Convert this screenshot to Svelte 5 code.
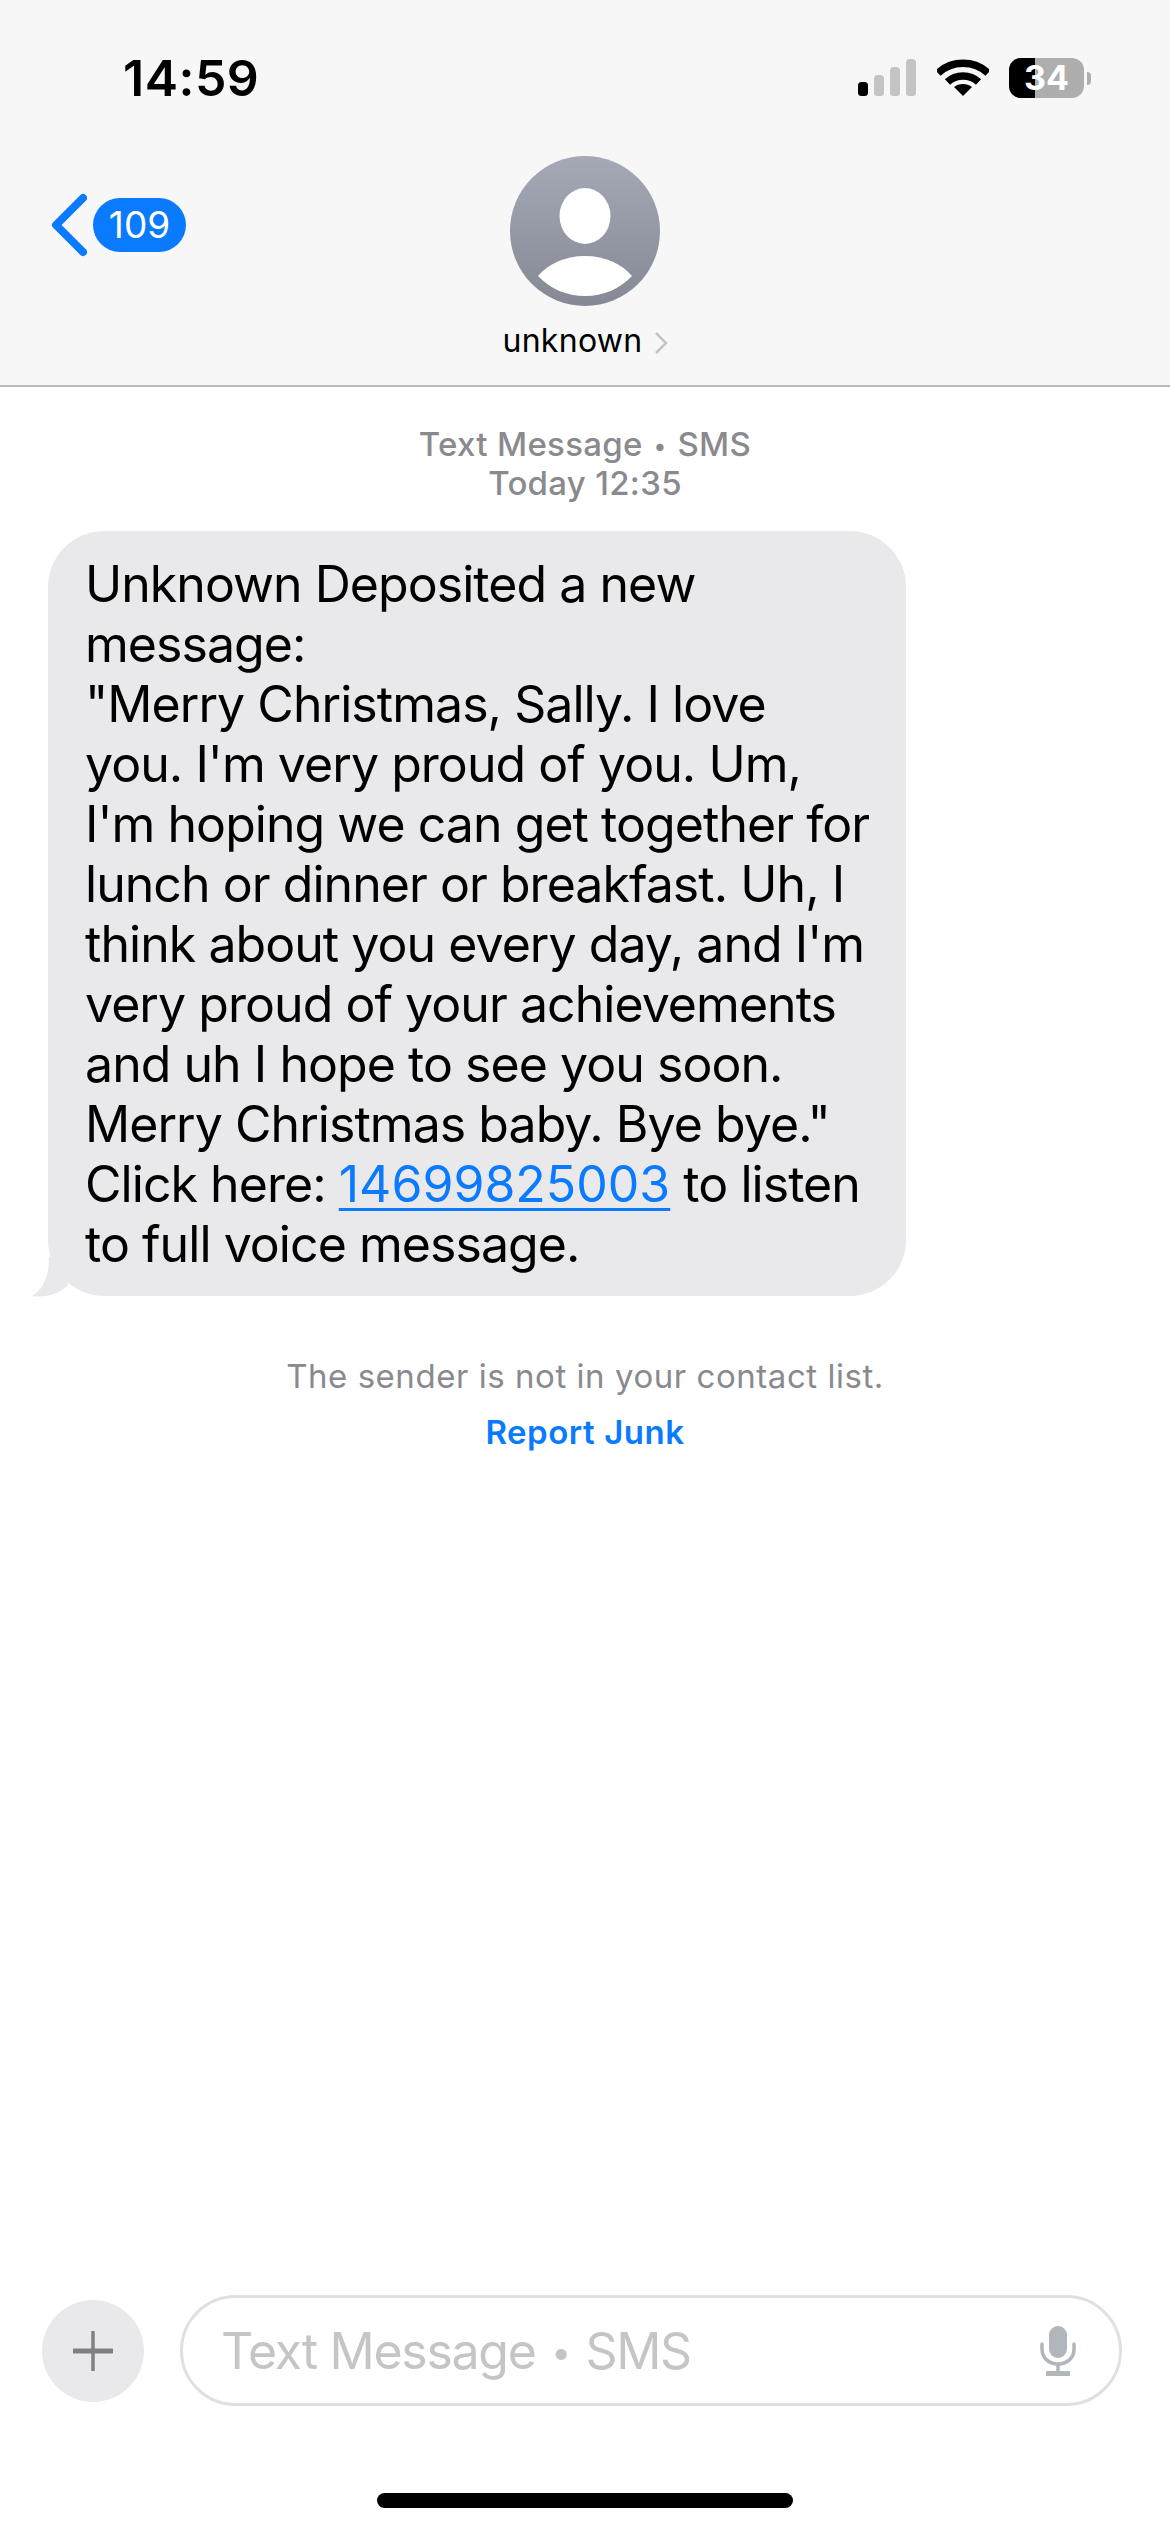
<script>
  const lines = [
    "Unknown Deposited a new",
    "message:",
    "\"Merry Christmas, Sally. I love",
    "you. I'm very proud of you. Um,",
    "I'm hoping we can get together for",
    "lunch or dinner or breakfast. Uh, I",
    "think about you every day, and I'm",
    "very proud of your achievements",
    "and uh I hope to see you soon.",
    "Merry Christmas baby. Bye bye.\"",
  ];
</script>

<div class="phone">
  <header>
    <div class="status">
      <span class="time">14:59</span>
      <div class="status-icons">
        <svg class="signal" width="58" height="38" viewBox="0 0 58 38">
          <rect x="0" y="23" width="10" height="14" rx="3.5" fill="#000" />
          <rect x="16" y="16" width="10" height="21" rx="3.5" fill="#c4c4c4" />
          <rect x="32" y="8" width="10" height="29" rx="3.5" fill="#c4c4c4" />
          <rect x="48" y="0" width="10" height="37" rx="3.5" fill="#c4c4c4" />
        </svg>
        <svg class="wifi" width="52" height="38" viewBox="0 0 52 38">
          <path d="M1 14 C15 1 37 1 51 14" fill="none" stroke="#000" stroke-width="7.5" />
          <path d="M10.5 23 C19 15 33 15 41.5 23" fill="none" stroke="#000" stroke-width="7.5" />
          <path d="M17 28 C22 24 30 24 35 28 L26 37 Z" fill="#000" />
        </svg>
        <div class="battery">
          <div class="level"></div>
          <span>34</span>
        </div>
        <div class="nub"></div>
      </div>
    </div>
    <nav>
      <div class="back">
        <svg width="38" height="64" viewBox="0 0 38 64">
          <path d="M34 5 L7 32 L34 59" fill="none" stroke="#0a7aff" stroke-width="8" stroke-linecap="round" stroke-linejoin="round" />
        </svg>
        <span class="badge">109</span>
      </div>
      <div class="contact">
        <svg width="150" height="150" viewBox="0 0 150 150">
          <defs>
            <linearGradient id="avatar" x1="0" y1="0" x2="0" y2="1">
              <stop offset="0" stop-color="#a5a9b6" />
              <stop offset="1" stop-color="#858994" />
            </linearGradient>
          </defs>
          <circle cx="75" cy="75" r="75" fill="url(#avatar)" />
          <ellipse cx="75" cy="60" rx="25.5" ry="28" fill="#fff" />
          <path d="M28 120 C38 108 55 100 75 100 C95 100 112 108 122 120 C110 133 93 140 75 140 C57 140 40 133 28 120 Z" fill="#fff" />
        </svg>
        <div class="name">
          <span>unknown</span>
          <svg width="14" height="24" viewBox="0 0 14 24">
            <path d="M2 2 L12 12 L2 22" fill="none" stroke="#c4c4c6" stroke-width="2.5" />
          </svg>
        </div>
      </div>
      <div></div>
    </nav>
  </header>

  <main>
    <div class="meta">
      <div>Text Message <span class="dot">•</span> SMS</div>
      <div>Today 12:35</div>
    </div>
    <div class="bubble">
      {#each lines as line}
        <div>{line}</div>
      {/each}
      <div>Click here: <a href="#top">14699825003</a> to listen</div>
      <div>to full voice message.</div>
      <svg class="tail" width="40" height="40" viewBox="0 0 40 40">
        <path d="M17 0 C17 20 11 32 0 39 C14 41 27 37 36 28 L36 0 Z" fill="#e9e9eb" />
      </svg>
    </div>
    <div class="notice">
      <div>The sender is not in your contact list.</div>
      <div class="junk">Report Junk</div>
    </div>
  </main>

  <footer>
    <div class="composer">
      <div class="plus">
        <svg width="40" height="40" viewBox="0 0 40 40">
          <path d="M20 1 V39" stroke="#7f7f84" stroke-width="3.5" stroke-linecap="round" />
          <path d="M1 20 H39" stroke="#7f7f84" stroke-width="5" stroke-linecap="round" />
        </svg>
      </div>
      <div class="input">
        <span class="placeholder">Text Message <span class="dot">•</span> SMS</span>
        <svg width="36" height="50" viewBox="0 0 36 50">
          <rect x="9" y="0" width="18" height="32" rx="9" fill="#b1b5bc" />
          <path d="M2 18 V23 C2 32 9 38 18 38 C27 38 34 32 34 23 V18" fill="none" stroke="#b1b5bc" stroke-width="3.5" stroke-linecap="round" />
          <path d="M18 38 V46" stroke="#b1b5bc" stroke-width="3.5" />
          <rect x="6" y="45" width="24" height="5" rx="1" fill="#b1b5bc" />
        </svg>
      </div>
    </div>
    <div class="home-bar"></div>
  </footer>
</div>

<style>
  :global(body) {
    margin: 0;
    background: #fff;
  }

  .phone {
    width: 1170px;
    height: 2532px;
    display: flex;
    flex-direction: column;
    font-family: Inter, "Liberation Sans", sans-serif;
    color: #000;
    overflow: hidden;
  }

  header {
    height: 387px;
    box-sizing: border-box;
    background: #f7f7f7;
    border-bottom: 2px solid #b9b9bb;
  }

  .status {
    height: 156px;
    box-sizing: border-box;
    padding: 50px 0 0 123px;
    display: flex;
    justify-content: space-between;
    align-items: flex-start;
  }

  .time {
    font-size: 50px;
    line-height: 56px;
    font-weight: 600;
    letter-spacing: 0.5px;
  }

  .status-icons {
    display: flex;
    align-items: center;
    margin: 8px 79px 0 0;
    height: 40px;
  }

  .signal {
    margin-right: 21px;
  }

  .wifi {
    margin-right: 20px;
  }

  .battery {
    position: relative;
    width: 75px;
    height: 40px;
    border-radius: 12px;
    overflow: hidden;
    background: #aeaeae;
    display: flex;
    align-items: center;
    justify-content: center;
  }

  .level {
    position: absolute;
    left: 0;
    top: 0;
    bottom: 0;
    width: 26px;
    background: #000;
  }

  .battery span {
    position: relative;
    color: #fff;
    font-size: 34px;
    font-weight: 700;
    line-height: 40px;
  }

  .nub {
    width: 4px;
    height: 13px;
    margin-left: 3px;
    background: #aeaeae;
    border-radius: 0 8px 8px 0;
  }

  nav {
    display: grid;
    grid-template-columns: 1fr 300px 1fr;
    align-items: flex-start;
  }

  .back {
    display: flex;
    align-items: center;
    gap: 6px;
    padding: 37px 0 0 49px;
  }

  .badge {
    width: 93px;
    height: 54px;
    border-radius: 27px;
    background: #0a7aff;
    color: #fff;
    font-size: 37px;
    line-height: 54px;
    text-align: center;
  }

  .contact {
    display: flex;
    flex-direction: column;
    align-items: center;
  }

  .name {
    display: flex;
    align-items: center;
    gap: 11px;
    margin-top: 15px;
    font-size: 32px;
    line-height: 40px;
    letter-spacing: 0.3px;
  }

  .name svg {
    margin-top: 4px;
  }

  main {
    flex: 1;
    display: flex;
    flex-direction: column;
  }

  .meta {
    margin-top: 38px;
    text-align: center;
    color: #8a8a8e;
    font-size: 33px;
    line-height: 39px;
    font-weight: 500;
    letter-spacing: 0.3px;
  }

  .dot {
    font-size: 0.7em;
    line-height: 0;
    vertical-align: 0.1em;
    margin: 0 2px;
  }

  .bubble {
    position: relative;
    align-self: flex-start;
    box-sizing: border-box;
    width: 858px;
    margin: 28px 0 0 48px;
    padding: 23px 0 22px 37px;
    background: #e9e9eb;
    border-radius: 56px;
    font-size: 50px;
    line-height: 60px;
    letter-spacing: -0.95px;
    white-space: nowrap;
  }

  .bubble a {
    color: #0a7aff;
    letter-spacing: 0;
    text-decoration: underline;
    text-decoration-thickness: 3px;
    text-underline-offset: 6px;
  }

  .tail {
    position: absolute;
    left: -16px;
    bottom: -1px;
  }

  .notice {
    margin-top: 52px;
    text-align: center;
    color: #8a8a8e;
    font-size: 33px;
    line-height: 56px;
    letter-spacing: 0.54px;
  }

  .junk {
    color: #0a7aff;
    font-weight: 600;
  }

  footer {
    display: flex;
    flex-direction: column;
    align-items: center;
    padding-bottom: 24px;
  }

  .composer {
    width: 100%;
    box-sizing: border-box;
    padding: 0 48px 0 42px;
    display: flex;
    align-items: center;
    gap: 36px;
  }

  .plus {
    flex: none;
    width: 102px;
    height: 102px;
    border-radius: 50%;
    background: #e9e9eb;
    display: flex;
    align-items: center;
    justify-content: center;
  }

  .input {
    flex: 1;
    height: 111px;
    box-sizing: border-box;
    border: 3px solid #e0e0e2;
    border-radius: 56px;
    padding: 0 43px 0 38px;
    display: flex;
    align-items: center;
    justify-content: space-between;
    color: #c5c5c7;
    font-size: 50px;
  }

  .placeholder {
    letter-spacing: -1.3px;
  }

  .placeholder .dot {
    margin: 0 3px;
  }

  .home-bar {
    width: 416px;
    height: 15px;
    margin-top: 87px;
    border-radius: 8px;
    background: #000;
  }
</style>
